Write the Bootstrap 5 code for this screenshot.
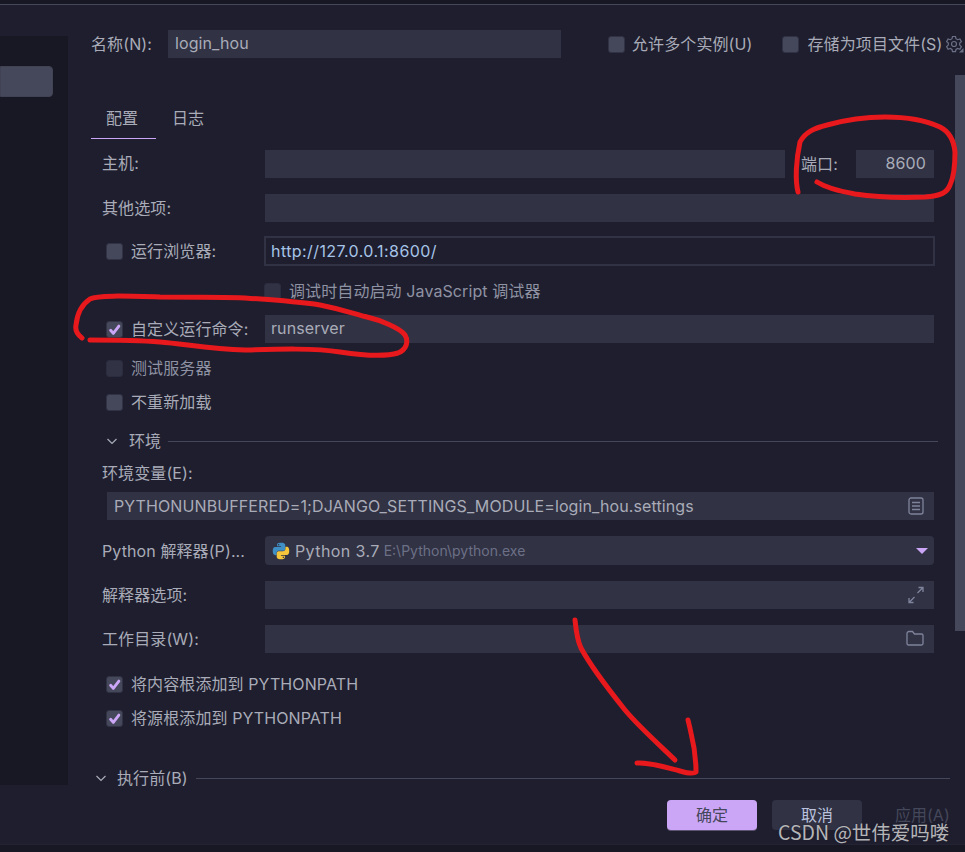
<!DOCTYPE html>
<html lang="zh-CN">
<head>
<meta charset="utf-8">
<title>运行配置</title>
<link rel="stylesheet" href="https://cdn.jsdelivr.net/npm/bootstrap@5.3.0/dist/css/bootstrap.min.css">
<style>
html,body{height:100%;}
body{background:#1e1e2e;color:#a9acb8;font-family:"Inter","Noto Sans CJK SC",sans-serif;font-size:16px;line-height:20px;letter-spacing:.1px;overflow:hidden;}
.app{position:relative;width:965px;height:852px;overflow:hidden;}
.topbar{height:5px;background:#181825;border-bottom:1px solid #45475a;}
.mainarea{height:780px;}
.sidenav{width:68px;height:749px;margin-top:31px;background:#181825;padding-top:30px;flex:none;}
.sideitem{width:53px;height:31px;background:#45475a;border-radius:0 4px 4px 0;border:1px solid #414354;}
.pane{flex:1 1 auto;min-width:0;padding-left:23px;}
.rw{height:28px;display:flex;align-items:center;}
.rw.ch{height:18px;}
.rw.h30{height:30px;}
.rw.h29{height:29px;}
.gp16{margin-top:16px;}.gp14{margin-top:14px;}.gp15{margin-top:15px;}
.namerow{margin-top:25px;}
.lbl{flex:none;}
.tx-name{width:77px;}
.form-control.fld{background:#313244;border:0;border-radius:0;color:#a9acb8;font-size:16px;letter-spacing:.1px;line-height:20px;height:28px;padding:0 6px 2px;box-shadow:none;}
.form-control.fld:focus{background:#313244;color:#a9acb8;box-shadow:none;}
.form-control.fld.fld-name{width:393px;flex:none;padding-left:7px;}
.fld-main{width:669px;flex:none;}
.fld-host{width:520px;flex:none;}
.form-control.fld.fld-port{width:78px;flex:none;text-align:right;padding-right:8px;}
.form-control.fld.fld-url{width:671px;height:30px;flex:none;background:#1e1e2e;border:2px solid #313244;color:#a6c4e8;padding:0 5px;margin-left:-1px;letter-spacing:.42px;}
.form-control.fld.fld-env{width:827px;flex:none;padding:0 6px 0 7px;}
.form-check-input.cbx{width:17px;height:17px;margin:0;background-color:#45475a;border:1px solid #313244;border-radius:3px;flex:none;box-shadow:none;}
.form-check-input.cbx:checked{background-color:#45475a;border-color:#313244;background-size:16px;background-image:url("data:image/svg+xml,%3csvg xmlns='http://www.w3.org/2000/svg' viewBox='0 0 16 16'%3e%3cpath fill='none' stroke='%23cba6f7' stroke-width='2.800' stroke-linecap='round' stroke-linejoin='round' d='M4 8.500l2.600 3L12 4.500'/%3e%3c/svg%3e");}
.form-check-input.cbx.dim{background-color:#313244;border-color:#2b2c3e;}
.form-check-input.cbx.head-opts{margin-left:47px;}
.form-check-input.cbx.gap-opt{margin-left:30px;}
.cklabel{margin-left:8px;white-space:nowrap;}
.cklabel.tight{margin-left:7px;}
.chk-l{padding-left:15px;}
.labcol{width:174px;padding-left:11px;flex:none;white-space:nowrap;}
.labcol.chk-lab{width:174px;padding-left:15px;display:flex;align-items:center;}
.tabbar{margin-top:40px;height:41px;border:0;}
.tabbar .nav-link{color:#a9acb8;background:none;border:0;border-radius:0;padding:10px 0 0;text-align:center;height:41px;font-size:16px;line-height:20px;}
.tabbar .nav-link.active{color:#a9acb8;background:none;border-bottom:1px solid #cba6f7;width:65px;padding-right:3px;}
.tabbar .nav-link.other{margin-left:15px;width:34px;}
.hostrow{margin-top:11px;}
.hostrow .labcol{padding-bottom:2px;}
.labport{width:71px;padding-left:16px;flex:none;}
.dbg{padding-left:173px;}
.dbg .cklabel{color:#8f92a3;}
.dimtxt{color:#8f92a3;}
.sechead{height:20px;display:flex;align-items:center;margin-top:20px;padding-left:15px;}
.sechead .rule{flex:1 1 auto;height:1px;background:#45475a;margin-left:7px;margin-right:27px;}
.sechead .chev{margin-right:11px;flex:none;}
.envlab{height:20px;margin-top:12px;padding-left:11px;}
.envbox{margin-top:9px;padding-left:16px;position:relative;}
.fieldwrap{position:relative;flex:none;}
.fieldicon{position:absolute;right:10px;top:5px;}
.selbox{height:29px;width:669px;flex:none;background:#313244;border-radius:4px;display:flex;align-items:center;padding-left:7px;}
.selbox .ver{margin-left:5px;letter-spacing:.4px;word-spacing:0;}
.selbox .pth{margin-left:4px;font-size:14px;color:#6c7086;letter-spacing:0;}
.selbox .caret-d{margin-left:auto;margin-right:6px;}
.cklist{margin-top:22px;}
.sechead.prehead{height:14px;margin-top:44px;padding-left:4px;}
.prehead .chev{margin-right:10px;}
.sechead.prehead .rule{margin-right:15px;margin-left:8px;}
.foot{height:59px;padding:15px 16px 0 0;justify-content:flex-end;}
.btn.act{width:90px;height:30px;padding:0;font-size:16px;line-height:30px;border:0;border-radius:4px;white-space:nowrap;}
.btn.ok{background:#cba6f7;color:#45475a;margin-right:15px;box-shadow:0 1px 0 #5c5470;}
.btn.no{background:#313244;color:#bac2de;margin-right:33px;}
.btn.ap{width:54px;background:none;color:#45475a;}
.btmstrip{height:8px;background:#181825;border-top:1px solid #232334;}
.sbar{position:absolute;left:955px;top:75px;width:10px;height:556px;background:#45475a;}
.gearic{position:absolute;left:945px;top:35px;}
.ink{position:absolute;left:0;top:0;pointer-events:none;}
.wmark{position:absolute;left:778px;top:820px;font-size:19.5px;line-height:24px;letter-spacing:0;color:#b5b5b8;text-shadow:0 0 2px #1e1e2e;font-family:"Noto Sans CJK SC",sans-serif;white-space:nowrap;}
</style>
</head>
<body>
<div class="app">
  <div class="topbar"></div>
  <div class="mainarea d-flex">
    <div class="sidenav"><div class="sideitem"></div></div>
    <div class="pane">
      <div class="rw namerow">
        <span class="lbl tx-name">名称(N):</span>
        <input class="form-control fld fld-name" value="login_hou">
        <input class="form-check-input cbx head-opts" type="checkbox">
        <span class="cklabel tight">允许多个实例(U)</span>
        <input class="form-check-input cbx gap-opt" type="checkbox">
        <span class="cklabel">存储为项目文件(S)</span>
      </div>
      <ul class="nav tabbar">
        <li class="nav-item"><a class="nav-link active" href="#">配置</a></li>
        <li class="nav-item"><a class="nav-link other" href="#">日志</a></li>
      </ul>
      <div class="rw hostrow">
        <span class="labcol">主机:</span>
        <input class="form-control fld fld-host">
        <span class="labport">端口:</span>
        <input class="form-control fld fld-port" value="8600">
      </div>
      <div class="rw gp16">
        <span class="labcol">其他选项:</span>
        <input class="form-control fld fld-main">
      </div>
      <div class="rw gp14 h30">
        <span class="labcol chk-lab"><input class="form-check-input cbx" type="checkbox"><span class="cklabel">运行浏览器:</span></span>
        <input class="form-control fld fld-url" value="http://127.0.0.1:8600/">
      </div>
      <div class="rw ch gp16 dbg">
        <input class="form-check-input cbx dim" type="checkbox">
        <span class="cklabel">调试时自动启动 JavaScript 调试器</span>
      </div>
      <div class="rw gp15">
        <span class="labcol chk-lab"><input class="form-check-input cbx" type="checkbox" checked><span class="cklabel">自定义运行命令:</span></span>
        <input class="form-control fld fld-main" value="runserver">
      </div>
      <div class="rw ch gp16 chk-l">
        <input class="form-check-input cbx dim" type="checkbox">
        <span class="cklabel dimtxt">测试服务器</span>
      </div>
      <div class="rw ch gp16 chk-l">
        <input class="form-check-input cbx" type="checkbox">
        <span class="cklabel">不重新加载</span>
      </div>
      <div class="sechead">
        <svg class="chev" width="12" height="12" viewBox="0 0 12 12"><path d="M1.500 4l4.500 4.500L10.500 4" fill="none" stroke="#a9acb8" stroke-width="1.200"/></svg>
        <span>环境</span><span class="rule"></span>
      </div>
      <div class="envlab">环境变量(E):</div>
      <div class="rw envbox">
        <div class="fieldwrap">
          <input class="form-control fld fld-env" value="PYTHONUNBUFFERED=1;DJANGO_SETTINGS_MODULE=login_hou.settings">
          <svg class="fieldicon" width="16" height="18" viewBox="0 0 16 18"><rect x="1" y="1" width="14" height="16" rx="2" fill="none" stroke="#7f849c" stroke-width="1.300"/><path d="M4 5.500h8M4 9h8M4 12.500h8" stroke="#7f849c" stroke-width="1.300"/></svg>
        </div>
      </div>
      <div class="rw gp16 h29">
        <span class="labcol">Python 解释器(P)...</span>
        <div class="selbox">
          <svg width="18" height="18" viewBox="0 0 24 24"><path fill="#3f8fc4" d="M11.900 1C6.500 1 6.800 3.300 6.800 3.300v2.500H12v.8H4.700S1 6.200 1 12s3.200 5.600 3.200 5.600h1.900V15s-.1-3.200 3.200-3.200h5.400s3 0 3-2.900V4.100S18 1 11.900 1zM8.900 2.700a1 1 0 110 2 1 1 0 010-2z"/><path fill="#f5c63c" d="M12.100 23c5.400 0 5.100-2.300 5.100-2.300v-2.500H12v-.8h7.300S23 17.800 23 12s-3.200-5.600-3.200-5.600h-1.900V9s.1 3.200-3.200 3.200H9.300s-3 0-3 2.900v4.800S6 23 12.100 23zm3-1.700a1 1 0 110-2 1 1 0 010 2z"/></svg>
          <span class="ver">Python 3.7</span><span class="pth">E:\Python\python.exe</span>
          <svg class="caret-d" width="12" height="8" viewBox="0 0 12 8"><path d="M0 1h12L6 7z" fill="#cba6f7"/></svg>
        </div>
      </div>
      <div class="rw gp16">
        <span class="labcol">解释器选项:</span>
        <div class="fieldwrap">
          <input class="form-control fld fld-main">
          <svg class="fieldicon" width="16" height="18" viewBox="0 0 16 18"><path d="M9.500 7L15 1.500M10.500 1.500H15V6M6.500 11L1 16.500M5.500 16.500H1V12" fill="none" stroke="#7f849c" stroke-width="1.300"/></svg>
        </div>
      </div>
      <div class="rw gp16">
        <span class="labcol">工作目录(W):</span>
        <div class="fieldwrap">
          <input class="form-control fld fld-main">
          <svg class="fieldicon" width="18" height="16" viewBox="0 0 18 16"><path d="M1 3.500a2 2 0 012-2h3.500l2 2.500H15.500a1.500 1.500 0 011.500 1.500v8a1.500 1.500 0 01-1.500 1.500h-13A1.500 1.500 0 011 13.500z" fill="none" stroke="#7f849c" stroke-width="1.300"/></svg>
        </div>
      </div>
      <div class="rw ch cklist chk-l">
        <input class="form-check-input cbx" type="checkbox" checked>
        <span class="cklabel">将内容根添加到 PYTHONPATH</span>
      </div>
      <div class="rw ch gp16 chk-l">
        <input class="form-check-input cbx" type="checkbox" checked>
        <span class="cklabel">将源根添加到 PYTHONPATH</span>
      </div>
      <div class="sechead prehead">
        <svg class="chev" width="12" height="12" viewBox="0 0 12 12"><path d="M1.500 4l4.500 4.500L10.500 4" fill="none" stroke="#a9acb8" stroke-width="1.200"/></svg>
        <span>执行前(B)</span><span class="rule"></span>
      </div>
    </div>
  </div>
  <div class="foot d-flex">
    <button type="button" class="btn act ok">确定</button>
    <button type="button" class="btn act no">取消</button>
    <button type="button" class="btn act ap">应用(A)</button>
  </div>
  <div class="btmstrip"></div>

  <div class="sbar"></div>
  <svg class="gearic" width="19" height="18" viewBox="0 0 19 18"><path d="M7.500 1.500h3l.5 2.200 1.700 1 2.200-.7 1.500 2.600-1.700 1.500v2l1.700 1.500-1.500 2.600-2.200-.7-1.700 1-.5 2.200h-3l-.5-2.200-1.700-1-2.200.7-1.500-2.600 1.700-1.500v-2L1.600 6.600 3.100 4l2.200.7 1.700-1z" fill="none" stroke="#6c7086" stroke-width="1.200"/><circle cx="9" cy="9" r="2.500" fill="none" stroke="#6c7086" stroke-width="1.200"/><path d="M18.500 13v4.500H14z" fill="#6c7086"/></svg>
  <svg class="ink" width="965" height="852" viewBox="0 0 965 852">
    <g fill="none" stroke="#e8191c" stroke-width="5" stroke-linecap="round" stroke-linejoin="round">
      <path d="M798 192C795 180 796 160 800 142C805 132 815 128 827 125C845 120 865 117 885 117C905 117 925 120 940 127C950 132 954 142 955 152C955 165 954 177 950 185C947 193 940 196 925 197C900 198 875 197 855 194C838 191 825 187 817 182"/>
      <path d="M82 338C78 335 75 330 76 325C77 315 81 305 90 299C98 295 125 296 160 297C195 297 225 297 245 298C275 300 300 302 320 305C345 310 355 314 367 317C380 320 400 328 405 335C409 342 406 350 398 353C385 357 360 355 340 352C315 348 280 349 245 350C210 349 185 344 160 342C135 340 110 340 90 340"/>
      <path d="M575 620C576 630 577 640 581 648C590 665 605 685 625 710C640 728 665 750 675 760"/>
      <path d="M637 763C650 762 665 767 680 771C687 773 694 774 696 772C696 760 694 745 691 733C690 728 689 724 688 720"/>
    </g>
  </svg>
  <div class="wmark">CSDN @世伟爱吗喽</div>
</div>
<script src="https://cdn.jsdelivr.net/npm/bootstrap@5.3.0/dist/js/bootstrap.bundle.min.js"></script>
</body>
</html>
